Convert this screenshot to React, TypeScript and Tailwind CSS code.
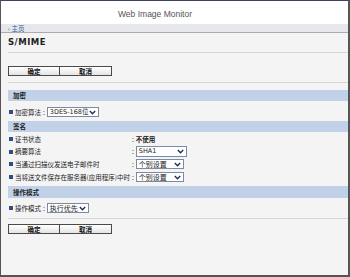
import React from "react";

const cjk = "font-['Noto_Sans_CJK_SC','Noto_Sans',sans-serif]";

const Chevron = () => (
  <svg width="7" height="5" viewBox="0 0 7 5" className="shrink-0">
    <polyline points="0.8,1 3.5,3.8 6.2,1" fill="none" stroke="#1d2a55" strokeWidth="1.3" />
  </svg>
);

const Select = ({ value, width, latin }: { value: string; width: string; latin?: boolean }) => (
  <div
    className={`flex h-[10px] items-center justify-between overflow-hidden border border-[#7d8aa3] bg-white pl-[2px] pr-[2px] ${width}`}
  >
    <span
      className={`whitespace-nowrap leading-none text-[#222] ${
        latin ? "font-['DejaVu_Sans','Noto_Sans_CJK_SC',sans-serif] text-[6.5px]" : `${cjk} text-[7px]`
      }`}
    >
      {value}
    </span>
    <Chevron />
  </div>
);

const Bullet = () => <span className="mr-[2px] h-[4px] w-[4px] shrink-0 bg-[#2f4b8c]" />;

const SectionBar = ({ title, h = "h-[11px]" }: { title: string; h?: string }) => (
  <div className={`flex items-center bg-[#c1d1e7] pl-[5px] ${h}`}>
    <span className={`${cjk} text-[6.5px] font-bold leading-none text-[#222]`}>{title}</span>
  </div>
);

const Buttons = () => (
  <div className="flex h-[10px]">
    {["确定", "取消"].map((t, i) => (
      <div
        key={t}
        className={`flex items-center justify-center border border-[#4a4a4a] bg-gradient-to-b from-white to-[#e4e4e4] ${
          i === 0 ? "w-[52px]" : "-ml-px w-[53px]"
        }`}
      >
        <span className={`${cjk} text-[6.5px] font-bold leading-none text-[#111]`}>{t}</span>
      </div>
    ))}
  </div>
);

const Label = ({ text, w }: { text: string; w?: string }) => (
  <span className={`${cjk} text-[6.5px] leading-none text-[#222] whitespace-nowrap ${w ?? ""}`}>{text}</span>
);

const Colon = () => <span className={`${cjk} mx-[2px] text-[6.5px] leading-none text-[#222]`}>:</span>;

export default function App() {
  return (
    <div className="h-[277px] w-[350px] overflow-hidden border-t border-l border-r-2 border-b-2 border-t-[#3b4266] border-l-[#555] border-r-[#555] border-b-[#555] bg-[#f4f4f4]">
      {/* header */}
      <div className="flex h-[23px] items-center bg-white pl-[117px] pt-[4px]">
        <span className="font-['Liberation_Sans',Arial,sans-serif] text-[8.5px] leading-none text-[#555]">
          Web Image Monitor
        </span>
      </div>
      <div className="flex h-[9px] items-center border-b border-[#a9abb1] bg-[#e6e7eb] pl-[7px] pt-[1px]">
        <span className={`${cjk} text-[6.5px] leading-none text-[#36599c]`}>‹ 主页</span>
      </div>

      <div className="pl-[7px]">
        <div className="flex h-[20px] items-center border-b border-[#d6d6d6]">
          <span className="font-['DejaVu_Sans',sans-serif] text-[8.5px] font-bold leading-none tracking-[0.5px] text-[#222]">
            S/MIME
          </span>
        </div>

        <div className="mt-[13px]">
          <Buttons />
        </div>
        <div className="mt-[6px] border-t border-[#d6d6d6]" />

        <div className="mt-[7px]">
          <SectionBar title="加密" />
        </div>
        <div className="mt-[6px] flex h-[10px] items-center pl-[1px]">
          <Bullet />
          <Label text="加密算法" />
          <Colon />
          <Select value="3DES-168位" width="w-[52px]" latin />
        </div>

        <div className="mt-[4px]">
          <SectionBar title="签名" />
        </div>
        <div className="mt-[2px] flex h-[10px] items-center pl-[1px]">
          <Bullet />
          <Label text="证书状态" w="w-[115px]" />
          <Colon />
          <span className={`${cjk} text-[6.5px] font-bold leading-none text-[#222]`}>不使用</span>
        </div>
        <div className="mt-[2px] flex h-[11px] items-center pl-[1px]">
          <Bullet />
          <Label text="摘要算法" w="w-[115px]" />
          <Colon />
          <Select value="SHA1" width="w-[51px] h-[11px]" latin />
        </div>
        <div className="mt-[2px] flex h-[10px] items-center pl-[1px]">
          <Bullet />
          <Label text="当通过扫描仪发送电子邮件时" w="w-[115px]" />
          <Colon />
          <Select value="个别设置" width="w-[48px]" />
        </div>
        <div className="mt-[3px] flex h-[10px] items-center pl-[1px]">
          <Bullet />
          <Label text="当将送文件保存在服务器(应用程序)中时" w="w-[115px]" />
          <Colon />
          <Select value="个别设置" width="w-[48px]" />
        </div>

        <div className="mt-[4px]">
          <SectionBar title="操作模式" h="h-[12px]" />
        </div>
        <div className="mt-[5px] flex h-[10px] items-center pl-[1px]">
          <Bullet />
          <Label text="操作模式" />
          <Colon />
          <Select value="执行优先" width="w-[42px]" />
        </div>
        <div className="mt-[5px] border-t border-[#d6d6d6]" />

        <div className="mt-[5px]">
          <Buttons />
        </div>
      </div>
    </div>
  );
}
